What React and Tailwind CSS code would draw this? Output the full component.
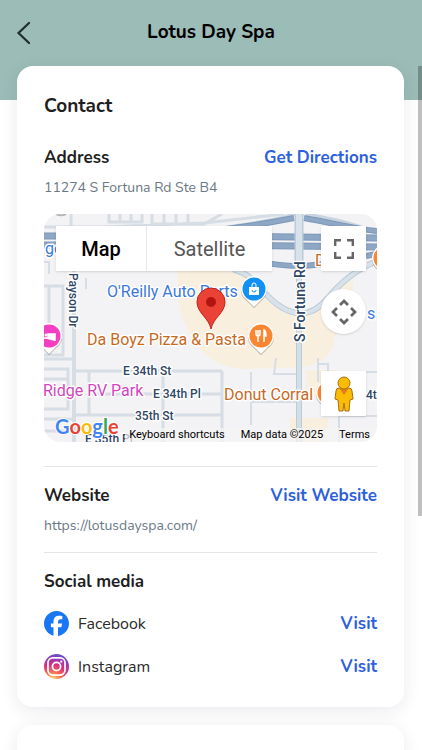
import React, { useState } from "react";
import { FaFacebook } from "react-icons/fa6";

const pinPath =
  "M0 18 L-7 11 A13 13 0 1 1 7 11 Z";

const MapLabel = ({ x, y, className, children, transform }) => (
  <text
    x={x}
    y={y}
    transform={transform}
    stroke="#fff"
    strokeWidth="3"
    strokeLinejoin="round"
    paintOrder="stroke"
    className={className}
  >
    {children}
  </text>
);

const PlacePin = ({ x, y, color, children }) => (
  <g transform={`translate(${x} ${y})`}>
    <path d={pinPath} transform="translate(0 1)" fill="#000" opacity="0.3" />
    <path d={pinPath} fill="#fff" />
    <circle r="11.5" fill={color} />
    {children}
  </g>
);

const MapCanvas = () => (
  <svg
    viewBox="0 0 333 228"
    preserveAspectRatio="xMidYMid slice"
    className="block h-full w-full font-['Roboto',sans-serif]"
    aria-label="Map of the area"
  >
    <rect width="333" height="228" fill="#f3f2f4" />

    {/* commercial areas */}
    <path
      d="M134 55 H190 C212 66 230 92 249 98 C272 101 286 82 309 65 V90 C309 110 295 112 291 122 C289 142 278 150 258 153 L200 155 C165 154 140 125 134 84 Z"
      fill="#f9efdf"
    />
    <path d="M262 156 H292 V182 H262 Z M246 204 H284 V228 H246 Z" fill="#f9efdf" />

    {/* minor streets */}
    <g fill="none" stroke="#d6dde4" strokeWidth="3">
      <path d="M0 13 H60 L160 9 L240 0 M27 0 V14 M65 0 V8 H98 V0 M76 0 V8 M87 0 V8 M108 0 V10 H160 L178 0 M120 0 V9 M132 0 V9 M144 0 V9" />
      <path d="M30 55 V228" strokeWidth="4" />
      <path d="M0 72 H19 V141 H0 M5 72 V141 M0 145 H30 M0 155 H24 V195 H0 M0 165 H24 M0 178 H24 M0 205 H30 M0 217 H30" />
      <path d="M30 157 H178 M45 157 V201 H178 M119 157 V228 M30 201 H45 M178 157 V228 M45 180 H178" />
      <path d="M207 158 V211 M207 188 H256 M232 144 L230 160 H256 M274 144 V168 M274 150 H284 V158 M295 202 V228 M295 202 H333 M315 158 H333" strokeWidth="2" />
      <path d="M0 48 H5 V60 M42 64 V75" strokeWidth="2" />
    </g>

    {/* ramps */}
    <g fill="none" strokeLinecap="round">
      <path
        d="M191 56 C211 61 218 80 234 91 C254 105 270 100 282 86 C296 69 312 55 333 47"
        stroke="#bccbd7"
        strokeWidth="6"
      />
      <path
        d="M191 56 C211 61 218 80 234 91 C254 105 270 100 282 86 C296 69 312 55 333 47"
        stroke="#d8e2ea"
        strokeWidth="4"
      />
      <path d="M263 0 C290 5 306 8 333 19 M250 0 C220 10 200 8 160 18" stroke="#c8d4df" strokeWidth="3" />
    </g>

    {/* arterial */}
    <path d="M255 0 V228" stroke="#bccbd7" strokeWidth="6" />
    <path d="M255 60 V228" stroke="#d3dee7" strokeWidth="4" />

    {/* highway */}
    <g fill="none" stroke="#7d98b9" strokeWidth="7">
      <path d="M0 22 H180 L333 24 M0 31 H180 L333 33" />
      <path d="M165 17 C200 13 225 9 250 4 M260 4 C290 9 310 15 333 17" strokeWidth="6" />
      <path d="M190 42 C220 50 248 54 270 51 C295 49 310 44 333 40" strokeWidth="6" />
    </g>
    <g fill="none" stroke="#8ea7c5" strokeWidth="5">
      <path d="M0 22 H180 L333 24 M0 31 H180 L333 33" />
      <path d="M165 17 C200 13 225 9 250 4 M260 4 C290 9 310 15 333 17" strokeWidth="4" />
      <path d="M190 42 C220 50 248 54 270 51 C295 49 310 44 333 40" strokeWidth="4" />
    </g>
    <path d="M255 0 V60" stroke="#bccbd7" strokeWidth="9" />
    <path d="M255 0 V60" stroke="#d8e2ea" strokeWidth="6" />
    <path d="M12 0 A8 5 0 0 0 22 0" fill="#fff" stroke="#b5b5b5" strokeWidth="2" />

    {/* street names */}
    <g fill="#2f4665">
      <MapLabel x="79" y="161" className="text-[12px] font-medium">E 34th St</MapLabel>
      <MapLabel x="109" y="184" className="text-[12px] font-medium">E 34th Pl</MapLabel>
      <MapLabel x="91" y="206" className="text-[12px] font-medium">35th St</MapLabel>
      <MapLabel x="41" y="229" className="text-[12px] font-medium">E 35th Pl</MapLabel>
      <MapLabel x="322" y="185" className="text-[12px] font-medium">4th St</MapLabel>
      <MapLabel transform="translate(25 59) rotate(90)" className="text-[12px] font-medium">
        Payson Dr
      </MapLabel>
      <MapLabel transform="translate(261 128) rotate(-90)" className="text-[14px] font-medium">
        S Fortuna Rd
      </MapLabel>
    </g>

    {/* places */}
    <g fill="#3b79df">
      <MapLabel x="1" y="40" className="text-[16px]">ge</MapLabel>
      <MapLabel x="63" y="83" className="text-[16px]">O'Reilly Auto Parts</MapLabel>
      <MapLabel x="323" y="105" className="text-[16px]">s</MapLabel>
    </g>
    <g fill="#c9691e">
      <MapLabel x="43" y="131" className="text-[16px]">Da Boyz Pizza &amp; Pasta</MapLabel>
      <MapLabel x="180" y="186" className="text-[16px]">Donut Corral</MapLabel>
      <MapLabel x="271" y="52" className="text-[16px]">Donuts</MapLabel>
    </g>
    <g fill="#d545bd">
      <MapLabel x="-1" y="182" className="text-[16px]">Ridge RV Park</MapLabel>
    </g>

    <PlacePin x={210} y={75} color="#1291f5">
      <path d="M-5 -2 H5 V6 H-5 Z" fill="#fff" />
      <path d="M-2 -2 V-4 A2 2 0 0 1 2 -4 V-2" fill="none" stroke="#fff" />
      <path d="M-2 1 A2 2 0 0 0 2 1" fill="none" stroke="#1291f5" />
    </PlacePin>
    <PlacePin x={217} y={122} color="#fb8632">
      <g fill="none" stroke="#fff" strokeWidth="1.5">
        <path d="M-5 -6 V-2 Q-5 0 -3 0 Q-1 0 -1 -2 V-6 M-3 -6 V6" />
        <path d="M3 6 V-6 Q5 -5 5 0 H3" fill="#fff" />
      </g>
    </PlacePin>
    <PlacePin x={5} y={122} color="#f53fc3">
      <path d="M-6 -4 V5 M-6 2 H6 V5 M6 2 V-2 H-1 V2" fill="#fff" stroke="#fff" strokeWidth="1.5" />
      <circle cx="-3" cy="-1" r="1.5" fill="#fff" />
    </PlacePin>
    <PlacePin x={285} y={179} color="#fb8632" />
    <PlacePin x={341} y={44} color="#fb8632" />

    {/* location marker */}
    <path
      d="M167 115 C165 104 153 99 153 88 A14 14 0 0 1 181 88 C181 99 169 104 167 115 Z"
      fill="#ea4335"
      stroke="#c5221f"
    />
    <circle cx="167" cy="88" r="5" fill="#b31412" />

    <text
      x="11"
      y="220"
      stroke="#fff"
      strokeWidth="2"
      paintOrder="stroke"
      className="font-['Lato',sans-serif] text-[20px] font-bold"
    >
      <tspan fill="#4285f4">G</tspan>
      <tspan fill="#ea4335">o</tspan>
      <tspan fill="#fbbc04">o</tspan>
      <tspan fill="#4285f4">g</tspan>
      <tspan fill="#34a853">l</tspan>
      <tspan fill="#ea4335">e</tspan>
    </text>
  </svg>
);

const Pegman = () => (
  <svg viewBox="0 0 22 36" className="h-9 w-6">
    <g fill="#fbbc04" stroke="#a96f16" strokeWidth="1">
      <path d="M6 12 H16 Q19 12 19 15 L20 23 L17 24 L16 35 H12 L11 27 L10 35 H6 L5 24 L2 23 L3 15 Q3 12 6 12 Z" />
      <path d="M6 12 H16 L11 19 Z" fill="#e37d1b" stroke="none" />
      <circle cx="11" cy="7" r="6" />
    </g>
  </svg>
);

const InstagramIcon = () => (
  <svg viewBox="0 0 24 24" className="h-[25px] w-[25px]">
    <defs>
      <radialGradient id="insta" cx="0.35" cy="1.05" r="1.1">
        <stop offset="0.05" stopColor="#fed576" />
        <stop offset="0.28" stopColor="#f9774e" />
        <stop offset="0.58" stopColor="#d92e7f" />
        <stop offset="0.8" stopColor="#9b36b7" />
        <stop offset="1" stopColor="#515ecf" />
      </radialGradient>
    </defs>
    <circle cx="12" cy="12" r="12" fill="url(#insta)" />
    <g fill="none" stroke="#fff" strokeWidth="1.7">
      <rect x="3.8" y="3.8" width="16.4" height="16.4" rx="4.8" />
      <circle cx="12" cy="12" r="3.9" />
    </g>
    <circle cx="16.6" cy="7.4" r="1.1" fill="#fff" />
  </svg>
);

const ContactMap = () => {
  const [mapType, setMapType] = useState("map");

  return (
    <div className="relative mt-4 h-[228px] overflow-hidden rounded-2xl font-['Roboto',sans-serif]">
      <MapCanvas />
      <div className="absolute top-3 left-3 flex h-[45px] bg-white text-xl shadow-sm">
        <button
          type="button"
          onClick={() => setMapType("map")}
          className={
            "w-[91px] border-r border-gray-200 " +
            (mapType === "map" ? "font-medium text-black" : "text-[#565656]")
          }
        >
          Map
        </button>
        <button
          type="button"
          onClick={() => setMapType("satellite")}
          className={
            "w-[125px] " +
            (mapType === "satellite" ? "font-medium text-black" : "text-[#565656]")
          }
        >
          Satellite
        </button>
      </div>
      <button
        type="button"
        aria-label="Toggle fullscreen view"
        className="absolute top-3 right-[11px] flex h-[45px] w-[45px] items-center justify-center bg-white shadow-sm"
      >
        <svg viewBox="0 0 20 20" className="h-5 w-5" fill="none" stroke="#666" strokeWidth="2.4">
          <path d="M1.2 7 V1.2 H7 M13 1.2 H18.8 V7 M18.8 13 V18.8 H13 M7 18.8 H1.2 V13" />
        </svg>
      </button>
      <button
        type="button"
        aria-label="Map camera controls"
        className="absolute top-[75px] right-[11px] flex h-[45px] w-[45px] items-center justify-center rounded-full bg-white shadow-sm"
      >
        <svg viewBox="0 0 26 26" className="h-[26px] w-[26px]" fill="none" stroke="#666" strokeWidth="2.7">
          <path d="M9 6 L13 2 L17 6 M9 20 L13 24 L17 20 M6 9 L2 13 L6 17 M20 9 L24 13 L20 17" />
        </svg>
      </button>
      <button
        type="button"
        aria-label="Drag Pegman onto the map to open Street View"
        className="absolute right-[11px] bottom-[26px] flex h-[45px] w-[45px] items-center justify-center bg-white shadow-sm"
      >
        <Pegman />
      </button>
      <div className="absolute right-0 bottom-0 flex h-[14px] items-center gap-4 bg-[#f5f5f5]/70 pr-[7px] pl-1 text-[11px] leading-[14px] text-black">
        <button type="button">Keyboard shortcuts</button>
        <span>Map data ©2025</span>
        <a href="#terms">Terms</a>
      </div>
    </div>
  );
};

const SectionHeader = ({ title, action, href }) => (
  <div className="flex items-center justify-between text-[17px] leading-6 font-bold">
    <h3 className="text-[#1f1f1f]">{title}</h3>
    {action && (
      <a href={href} className="text-[#2c60dc]">
        {action}
      </a>
    )}
  </div>
);

const SocialRow = ({ name, icon, href }) => (
  <li className="flex h-[25px] items-center">
    {icon}
    <span className="ml-[9px] text-base text-[#2b2b2b]">{name}</span>
    <a href={href} className="ml-auto text-[17px] font-bold text-[#2c60dc]">
      Visit
    </a>
  </li>
);

const App = () => {
  return (
    <div className="h-screen overflow-hidden bg-white font-['Nunito','Lato',sans-serif]">
      <header className="grid h-[100px] grid-cols-[48px_1fr_48px] items-start bg-[#9cbcb7]">
        <button type="button" aria-label="Back" className="mt-5 ml-4 h-[26px] w-4">
          <svg viewBox="0 0 16 26" className="h-[26px] w-4" fill="none" stroke="#1f2d2c" strokeWidth="2.2" strokeLinecap="round">
            <path d="M13 3 L2.5 13 L13 23" />
          </svg>
        </button>
        <h1 className="mt-[18px] text-center text-[19px] leading-7 font-bold text-black">
          Lotus Day Spa
        </h1>
      </header>

      <main className="relative -mt-[34px] flex flex-col gap-[18px] pr-[18px] pl-[17px]">
        <section className="rounded-2xl bg-white px-[27px] pt-[26px] pb-7 shadow-[0_4px_18px_rgba(30,30,80,0.09)]">
          <h2 className="mb-[26px] text-[19px] leading-7 font-bold text-[#1f1f1f]">Contact</h2>

          <SectionHeader title="Address" action="Get Directions" href="#directions" />
          <p className="mt-2 text-sm leading-5 text-[#6a7984]">11274 S Fortuna Rd Ste B4</p>
          <ContactMap />

          <hr className="mt-6 mb-[17px] border-[#e3e5e8]" />
          <SectionHeader title="Website" action="Visit Website" href="https://lotusdayspa.com/" />
          <p className="mt-2 text-sm leading-5 text-[#6a7984]">https://lotusdayspa.com/</p>

          <hr className="mt-4 mb-[17px] border-[#e3e5e8]" />
          <SectionHeader title="Social media" />
          <ul className="mt-[17px] flex flex-col gap-[18px]">
            <SocialRow
              name="Facebook"
              href="#facebook"
              icon={<FaFacebook className="h-[25px] w-[25px] text-[#1877f2]" />}
            />
            <SocialRow name="Instagram" href="#instagram" icon={<InstagramIcon />} />
          </ul>
        </section>
        <section className="h-40 rounded-2xl bg-white shadow-[0_4px_18px_rgba(30,30,80,0.09)]"></section>
      </main>

      <div className="fixed top-[66px] right-0 h-3/5 w-1 bg-black/25"></div>
    </div>
  );
};

export default App;
